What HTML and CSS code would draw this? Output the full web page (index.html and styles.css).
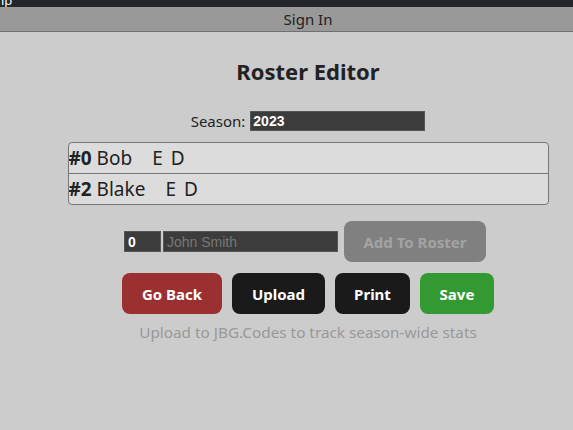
FILE: index.html
```html
<!DOCTYPE html>
<html>
<head>
<meta charset="utf-8">
<link rel="stylesheet" href="styles.css">
</head>
<body>
<div class="page">
  <div class="topbar"><span class="topbar-text">ip</span></div>
  <div class="signin"><span class="signin-text">Sign In</span></div>
  <main class="main">
    <h1 class="title">Roster Editor</h1>
    <div class="season">
      <label class="season-label">Season:</label>
      <input class="season-input" type="text" value="2023">
    </div>
    <div class="roster">
      <div class="row"><b class="num">#0</b> <span class="name">Bob</span><span class="act">E</span><span class="act">D</span></div>
      <div class="row"><b class="num">#2</b> <span class="name">Blake</span><span class="act">E</span><span class="act">D</span></div>
    </div>
    <div class="add">
      <input class="num-input" type="text" value="0">
      <input class="name-input" type="text" placeholder="John Smith">
      <button class="btn btn-add">Add To Roster</button>
    </div>
    <div class="actions">
      <button class="btn btn-back">Go Back</button>
      <button class="btn btn-dark btn-upload">Upload</button>
      <button class="btn btn-dark btn-print">Print</button>
      <button class="btn btn-save">Save</button>
    </div>
    <p class="hint">Upload to JBG.Codes to track season-wide stats</p>
  </main>
</div>
</body>
</html>
```

FILE: styles.css
```css
html, body {
  margin: 0;
  padding: 0;
  background: #cccccc;
  overflow: hidden;
}
.page {
  width: 100%;
  font-family: "Noto Sans", "Open Sans", sans-serif;
  color: #222;
}
.topbar {
  height: 7px;
  background: #25262b;
  overflow: hidden;
  position: relative;
}
.topbar-text {
  position: absolute;
  left: 1px;
  top: -9px;
  color: #fff;
  font-size: 13px;
}
.signin {
  height: 24px;
  line-height: 24px;
  background: #999999;
  border-bottom: 1px solid #6f6f6f;
  padding-left: 43px;
  text-align: center;
  font-size: 15px;
  color: #222;
}
.main {
  padding-left: 43px;
  display: flex;
  flex-direction: column;
  align-items: center;
}
.title {
  margin: 26px 0 0;
  font-size: 22px;
  font-weight: 700;
  line-height: 26px;
  color: #222;
}
.season {
  margin-top: 27px;
  display: flex;
  align-items: center;
  gap: 5px;
  font-size: 15px;
  height: 20px;
}
.season-label {
  color: #222;
}
.season-input {
  width: 175px;
  height: 20px;
  box-sizing: border-box;
  border: 1px solid #555;
  background: #3c3c3c;
  color: #fff;
  font-family: "Liberation Sans", Arial, sans-serif;
  font-size: 14px;
  font-weight: 700;
  padding: 0 2px;
}
.roster {
  margin-top: 11px;
  width: 481px;
  box-sizing: border-box;
  border: 1px solid #777;
  border-radius: 4px;
  background: #dcdcdc;
  overflow: hidden;
}
.row {
  height: 30px;
  line-height: 31px;
  font-size: 19px;
  color: #222;
  white-space: nowrap;
}
.row + .row {
  border-top: 1px solid #777;
}
.num {
  font-weight: 700;
}
.act {
  margin-left: 14px;
}
.act + .act {
  margin-left: 8px;
}
.name {
  margin-right: 6px;
}
.add {
  margin-top: 16px;
  display: flex;
  align-items: center;
  gap: 2px;
}
.num-input, .name-input {
  height: 21px;
  box-sizing: border-box;
  border: 1px solid #555;
  background: #3c3c3c;
  color: #fff;
  font-family: "Liberation Sans", Arial, sans-serif;
  font-size: 14px;
  padding: 0 3px;
}
.num-input {
  width: 37px;
  font-weight: 700;
}
.name-input {
  width: 175px;
}
.name-input::placeholder {
  color: #777;
}
.btn {
  border: none;
  border-radius: 8px;
  font-family: "Noto Sans", "Open Sans", sans-serif;
  font-size: 15px;
  font-weight: 700;
  color: #fff;
  height: 41px;
  padding: 0;
  white-space: nowrap;
}
.btn-add {
  margin-left: 4px;
  margin-right: 6px;
  width: 142px;
  background: #808080;
  color: #a3a3a3;
}
.actions {
  margin-top: 11px;
  display: flex;
  gap: 10px;
}
.btn-back {
  width: 100px;
  background: #9b3030;
}
.btn-dark {
  background: #1a1a1a;
}
.btn-upload {
  width: 93px;
}
.btn-print {
  width: 75px;
}
.btn-save {
  width: 74px;
  background: #339933;
}
.hint {
  margin: 8px 0 0;
  font-size: 15.3px;
  color: #999;
}
```
